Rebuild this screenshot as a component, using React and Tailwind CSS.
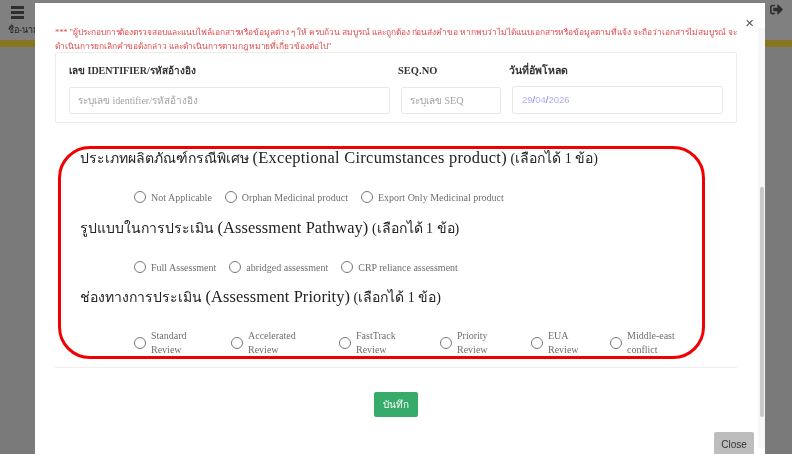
import { FaSignOutAlt } from "react-icons/fa";

const Radio = ({ label, lines }) => (
  <label className="flex items-center gap-[5px] text-[10px] text-[#6f6f6f]">
    <span className="w-[12px] h-[12px] rounded-full border border-[#777] bg-white shrink-0" />
    {lines ? (
      <span className="leading-[13.5px]">
        {lines[0]}
        <br />
        {lines[1]}
      </span>
    ) : (
      <span>{label}</span>
    )}
  </label>
);

const Heading = ({ thai, latin, wide }) => (
  <h3 className="h-[20px] text-[14px] leading-[20px] text-[#222] whitespace-nowrap">
    {thai}{" "}
    <span className={wide ? "text-[16.4px] leading-[16px] tracking-[0.3px]" : "text-[16.4px] leading-[16px] tracking-[0.1px]"}>
      {latin}
    </span>{" "}
    (เลือกได้ 1 ข้อ)
  </h3>
);

export default function App() {
  return (
    <div className="relative w-[792px] h-[454px] overflow-hidden bg-[#7a7a7a] font-['Liberation_Serif',serif] blur-[0.35px]">
      {/* page behind the modal */}
      <div className="h-[40px] bg-[#808080] px-[10px] pt-[6px] flex justify-between">
        <div>
          <div className="flex flex-col gap-[2px] w-[13px] ml-[1px]">
            <span className="h-[3px] bg-[#2e2e2e]" />
            <span className="h-[3px] bg-[#2e2e2e]" />
            <span className="h-[3px] bg-[#2e2e2e]" />
          </div>
          <p className="text-[9px] text-[#222] mt-[5px] -ml-[2px]">ชื่อ-นาม</p>
        </div>
        <FaSignOutAlt size={13} className="text-[#2e2e2e] -mt-[3px] -mr-[1px]" />
      </div>
      <div className="h-[7px] bg-[#86761f]" />

      {/* modal */}
      <div className="absolute left-[35px] top-[3px] w-[730px] h-[451px] bg-white flex">
        <div className="flex-1 min-w-0 pl-[20px] pt-[23px] pr-[21px]">
          <p className="text-[8.4px] tracking-[-0.04px] leading-[14px] text-[#e04848] whitespace-nowrap">
            *** "ผู้ประกอบการต้องตรวจสอบและแนบไฟล์เอกสารหรือข้อมูลต่าง ๆ ให้ ครบถ้วน สมบูรณ์ และถูกต้อง ก่อนส่งคำขอ หากพบว่าไม่ได้แนบเอกสารหรือข้อมูลตามที่แจ้ง จะถือว่าเอกสารไม่สมบูรณ์ จะ
            <br />
            ดำเนินการยกเลิกคำขอดังกล่าว และดำเนินการตามกฎหมายที่เกี่ยวข้องต่อไป"
          </p>

          <div className="-mt-[2px] h-[71px] border border-[#ececec] rounded-[2px] flex pl-[13px] pt-[9px]">
            <div className="w-[321px]">
              <p className="text-[10px] font-bold text-[#333] leading-[18px]">เลข IDENTIFIER/รหัสอ้างอิง</p>
              <input
                placeholder="ระบุเลข identifier/รหัสอ้างอิง"
                className="mt-[7px] w-full h-[27px] px-[8px] text-[10px] border border-[#e8e8e8] rounded-[2px] placeholder:text-[#a3a3a3]"
              />
            </div>
            <div className="ml-[11px] w-[100px]">
              <p className="text-[10.5px] font-bold text-[#333] leading-[18px] -ml-[3px]">SEQ.NO</p>
              <input
                placeholder="ระบุเลข SEQ"
                className="mt-[7px] w-full h-[27px] px-[8px] text-[10px] border border-[#e8e8e8] rounded-[2px] placeholder:text-[#a3a3a3]"
              />
            </div>
            <div className="ml-[11px] w-[211px]">
              <p className="text-[10.5px] font-bold text-[#333] leading-[18px] -ml-[3px]">วันที่อัพโหลด</p>
              <div className="mt-[6px] h-[28px] border border-[#e8e8e8] rounded-[2px] px-[9px] flex items-center text-[9.5px] font-['Liberation_Sans',sans-serif] text-[#aeb0f0]">
                29<span className="text-[#6f72d8]">/</span>04<span className="text-[#6f72d8]">/</span>2026
              </div>
            </div>
          </div>

          <div className="mt-[26px] h-[219px] pl-[25px] border-b border-[#eeeeee]">
            <Heading wide thai="ประเภทผลิตภัณฑ์กรณีพิเศษ" latin="(Exceptional Circumstances product)" />
            <div className="flex gap-[13px] pl-[54px] mt-[21px] h-[14px]">
              <Radio label="Not Applicable" />
              <Radio label="Orphan Medicinal product" />
              <Radio label="Export Only Medicinal product" />
            </div>
            <div className="mt-[15px]">
              <Heading thai="รูปแบบในการประเมิน" latin="(Assessment Pathway)" />
            </div>
            <div className="flex gap-[13px] pl-[54px] mt-[21px] h-[14px]">
              <Radio label="Full Assessment" />
              <Radio label="abridged assessment" />
              <Radio label="CRP reliance assessment" />
            </div>
            <div className="mt-[14px]">
              <Heading thai="ช่องทางการประเมิน" latin="(Assessment Priority)" />
            </div>
            <div className="flex pl-[54px] mt-[21px]">
              <div className="w-[97px]"><Radio lines={["Standard", "Review"]} /></div>
              <div className="w-[108px]"><Radio lines={["Accelerated", "Review"]} /></div>
              <div className="w-[101px]"><Radio lines={["FastTrack", "Review"]} /></div>
              <div className="w-[91px]"><Radio lines={["Priority", "Review"]} /></div>
              <div className="w-[79px]"><Radio lines={["EUA", "Review"]} /></div>
              <Radio lines={["Middle-east", "conflict"]} />
            </div>
          </div>

          <div className="flex justify-center mt-[24px]">
            <button className="h-[25px] w-[44px] rounded-[2px] bg-[#36ab6a] text-white text-[10px]">บันทึก</button>
          </div>
        </div>

        {/* scrollbar */}
        <div className="w-[7px] h-[420px] bg-[#f7f7f7] flex items-end mt-[25px] shrink-0">
          <div className="w-[4px] mx-auto h-[230px] mb-[31px] rounded-full bg-[#c8c8c8]" />
        </div>

        <button className="absolute right-[11px] top-[12px] text-[15px] leading-none text-[#555] font-['Liberation_Sans',sans-serif]">×</button>
        <button className="absolute right-[11px] top-[429px] w-[40px] h-[25px] rounded-[2px] bg-[#bdbdbd] text-[10px] text-[#333] font-['Liberation_Sans',sans-serif]">Close</button>
      </div>

      {/* red annotation outline */}
      <div className="absolute left-[58px] top-[146px] w-[647px] h-[213px] rounded-[32px] border-[3px] border-[#f00000] pointer-events-none" />
    </div>
  );
}
